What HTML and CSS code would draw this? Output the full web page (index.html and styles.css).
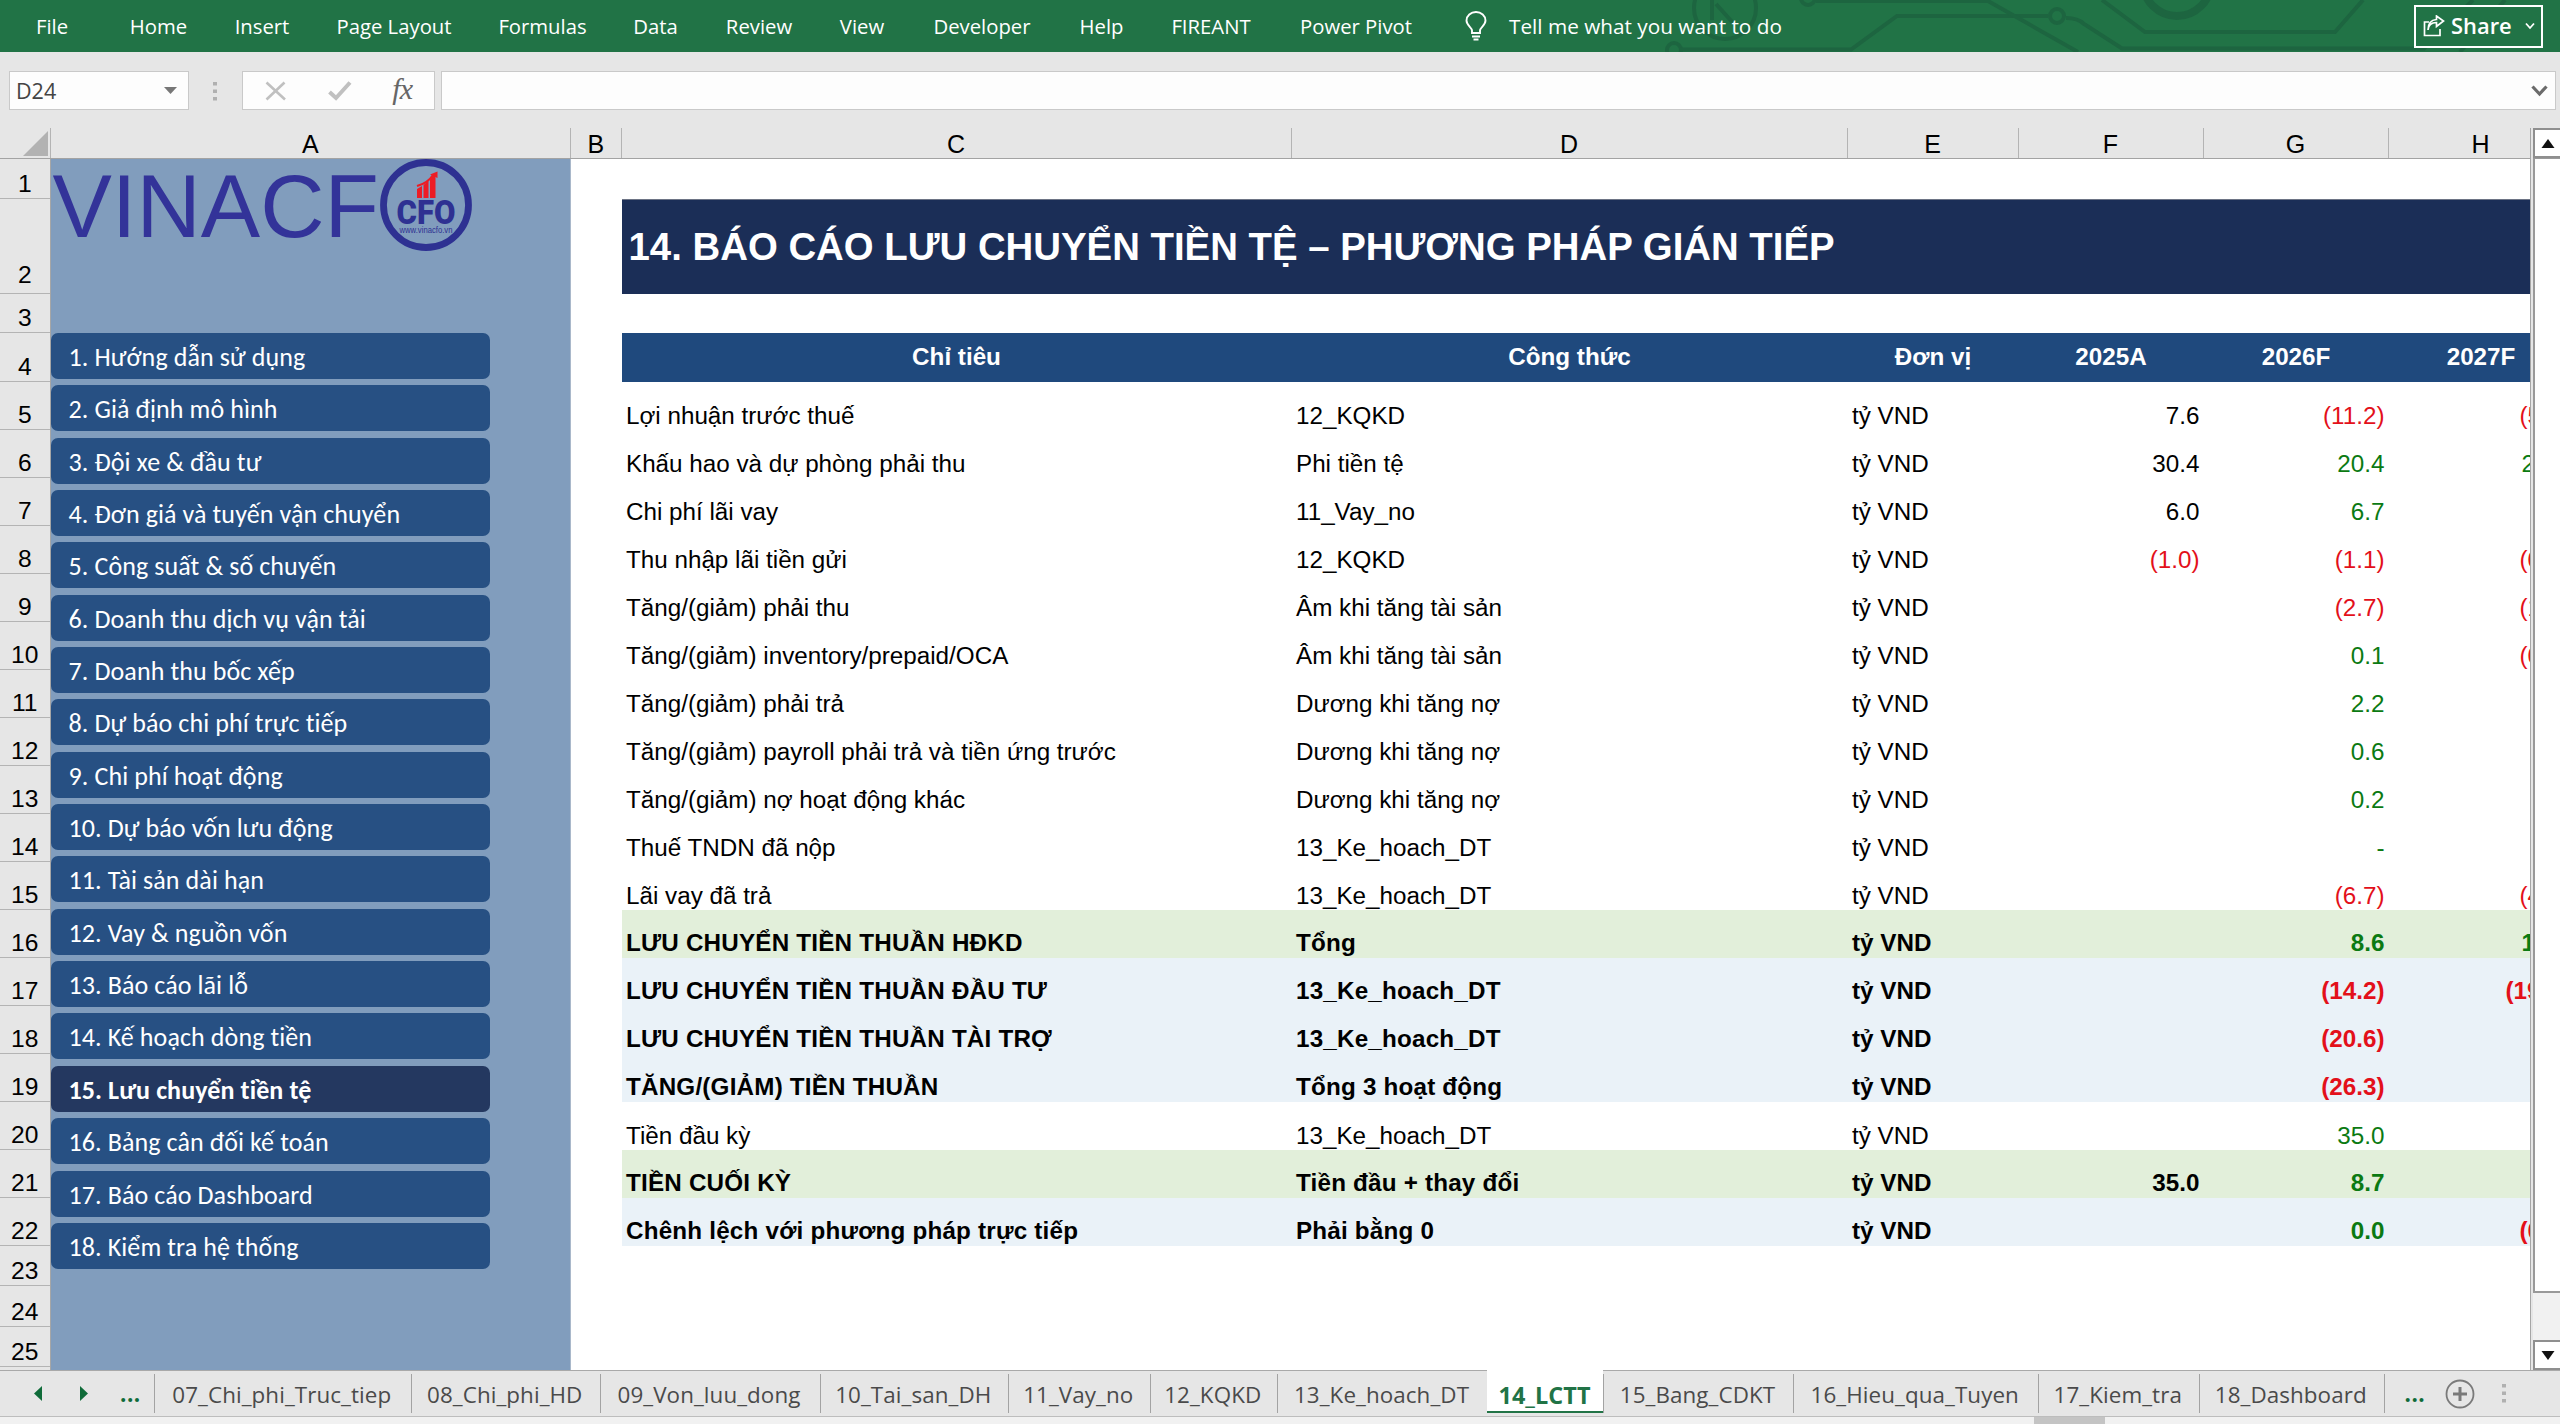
FILE: index.html
```html
<!DOCTYPE html>
<html lang="vi">
<head>
<meta charset="utf-8">
<title>14_LCTT</title>
<link rel="stylesheet" href="styles.css">
</head>
<body>
<header class="ribbon">
  <svg class="circuit" width="900" height="52" viewBox="1660 0 900 52" fill="none" stroke="#1d6540" stroke-width="4">
    <circle cx="1674" cy="50" r="7"/>
    <path d="M1680 49.500H1851L1897 16H2048M2066 18Q2078 18 2084 24L2122 48.500H2424L2473 0"/>
    <circle cx="2057" cy="16" r="7"/>
    <circle cx="1808" cy="-2" r="7"/>
    <path d="M1816 1H1988L2078 52M2102 0L2145 32H2335L2363 0M2460 52L2505 0M1712 -4V20M1734 24L1716 4"/>
    <circle cx="1725" cy="8" r="31"/>
    <circle cx="2177" cy="-18" r="34" stroke-width="8"/>
  </svg>
  <nav class="menu">
    <span class="m-file">File</span><span class="m-home">Home</span><span class="m-insert">Insert</span><span class="m-page">Page Layout</span><span class="m-formulas">Formulas</span><span class="m-data">Data</span><span class="m-review">Review</span><span class="m-view">View</span><span class="m-dev">Developer</span><span class="m-help">Help</span><span class="m-fire">FIREANT</span><span class="m-pivot">Power Pivot</span>
  </nav>
  <svg class="bulb" width="22" height="30" viewBox="0 0 22 30" fill="none" stroke="#fff" stroke-width="1.900"><path d="M7 22V19.500C7 16.500 1.500 14.500 1.500 9.500A9.500 8.500 0 0 1 20.500 9.500C20.500 14.500 15 16.500 15 19.500V22ZM7 25.500H15M8.500 28.500H13.500"/></svg>
  <span class="tell">Tell me what you want to do</span>
  <button class="share">
    <svg width="22" height="22" viewBox="0 0 22 22" fill="none" stroke="#fff" stroke-width="1.700"><path d="M6 7H1.500V20.500H17V14M5 15C5.500 9.500 9 7.500 13.500 7.500V11.500L20.500 6L13.500 1V4.500C8 5 5 9 5 15Z"/></svg>
    <span>Share</span>
    <svg class="caret" width="10" height="8" viewBox="0 0 10 8" fill="none" stroke="#fff" stroke-width="1.800"><path d="M1 1.500L5 6L9 1.500"/></svg>
  </button>
</header>

<div class="formula-bar">
  <div class="name-box"><span>D24</span><svg width="14" height="8"><path d="M0 0H13L6.500 7Z" fill="#777"/></svg></div>
  <svg class="grip" width="4" height="19" fill="#b0b0b0"><path d="M0 0H4V3.500H0ZM0 7.500H4V11H0ZM0 15H4V18.500H0Z"/></svg>
  <div class="fx-box">
    <svg width="22" height="20" viewBox="0 0 22 20" fill="none" stroke="#c0c0c0" stroke-width="2.600"><path d="M1.500 1.500L20 18.500M19.500 1.500L1.500 18.500"/></svg>
    <svg width="24" height="20" viewBox="0 0 24 20" fill="none" stroke="#c0c0c0" stroke-width="4"><path d="M1.500 11L8 17L22 1.500"/></svg>
    <span class="fx">fx</span>
  </div>
  <div class="formula-input"><svg width="17" height="12" viewBox="0 0 17 12" fill="none" stroke="#6b6b6b" stroke-width="3.200"><path d="M1.500 1.500L8.500 9L15.500 1.500"/></svg></div>
</div>

<main class="workbook">
  <div class="sheet-pane">
    <div class="col-heads">
      <div class="corner"><svg width="26" height="25"><path d="M25 0V25H0Z" fill="#b2b2b2"/></svg></div>
      <div>A</div><div>B</div><div>C</div><div>D</div><div>E</div><div>F</div><div>G</div><div>H</div>
    </div>
    <div class="sheet">
      <div class="row-heads">
        <div>1</div><div class="tall">2</div><div>3</div><div>4</div><div>5</div><div>6</div><div>7</div><div>8</div><div>9</div><div>10</div><div>11</div><div>12</div><div>13</div><div>14</div><div>15</div><div>16</div><div>17</div><div>18</div><div>19</div><div>20</div><div>21</div><div>22</div><div>23</div><div>24</div><div>25</div><div></div>
      </div>
      <aside class="side">
        <div class="logo">
          <span class="logo-word">VINACF</span>
          <svg width="92" height="92" viewBox="0 0 92 92">
            <circle cx="46" cy="46" r="42.500" fill="none" stroke="#2e3192" stroke-width="6.800"/>
            <path d="M37 30L42 27V39H37ZM43.500 26L48.500 22V39H43.500ZM50 20.500L55.500 14V39H50Z" fill="#ed1c24"/>
            <path d="M37 27Q48 24 53 16" fill="none" stroke="#ed1c24" stroke-width="2.200"/>
            <path d="M50 15.500L57.500 12.500V19Z" fill="#ed1c24"/>
            <text class="logo-cfo" x="46" y="64.500" text-anchor="middle" textLength="59" lengthAdjust="spacingAndGlyphs">CFO</text>
            <text class="logo-url" x="46" y="74" text-anchor="middle" textLength="53" lengthAdjust="spacingAndGlyphs">www.vinacfo.vn</text>
          </svg>
        </div>
        <nav class="links">
          <a>1. Hướng dẫn sử dụng</a><a>2. Giả định mô hình</a><a>3. Đội xe &amp; đầu tư</a><a>4. Đơn giá và tuyến vận chuyển</a><a>5. Công suất &amp; số chuyến</a><a>6. Doanh thu dịch vụ vận tải</a><a>7. Doanh thu bốc xếp</a><a>8. Dự báo chi phí trực tiếp</a><a>9. Chi phí hoạt động</a><a>10. Dự báo vốn lưu động</a><a>11. Tài sản dài hạn</a><a>12. Vay &amp; nguồn vốn</a><a>13. Báo cáo lãi lỗ</a><a>14. Kế hoạch dòng tiền</a><a class="current">15. Lưu chuyển tiền tệ</a><a>16. Bảng cân đối kế toán</a><a>17. Báo cáo Dashboard</a><a>18. Kiểm tra hệ thống</a>
        </nav>
      </aside>
      <section class="report">
        <h1>14. BÁO CÁO LƯU CHUYỂN TIỀN TỆ – PHƯƠNG PHÁP GIÁN TIẾP</h1>
        <div class="row head"><span>Chỉ tiêu</span><span>Công thức</span><span>Đơn vị</span><span>2025A</span><span>2026F</span><span>2027F</span></div>
        <div class="row"><span>Lợi nhuận trước thuế</span><span>12_KQKD</span><span>tỷ VND</span><span>7.6</span><span class="neg">(11.2)</span><span class="neg">(5</span></div>
        <div class="row"><span>Khấu hao và dự phòng phải thu</span><span>Phi tiền tệ</span><span>tỷ VND</span><span>30.4</span><span class="pos">20.4</span><span class="pos">2</span></div>
        <div class="row"><span>Chi phí lãi vay</span><span>11_Vay_no</span><span>tỷ VND</span><span>6.0</span><span class="pos">6.7</span><span></span></div>
        <div class="row"><span>Thu nhập lãi tiền gửi</span><span>12_KQKD</span><span>tỷ VND</span><span class="neg">(1.0)</span><span class="neg">(1.1)</span><span class="neg">(0</span></div>
        <div class="row"><span>Tăng/(giảm) phải thu</span><span>Âm khi tăng tài sản</span><span>tỷ VND</span><span></span><span class="neg">(2.7)</span><span class="neg">(1</span></div>
        <div class="row"><span>Tăng/(giảm) inventory/prepaid/OCA</span><span>Âm khi tăng tài sản</span><span>tỷ VND</span><span></span><span class="pos">0.1</span><span class="neg">(0</span></div>
        <div class="row"><span>Tăng/(giảm) phải trả</span><span>Dương khi tăng nợ</span><span>tỷ VND</span><span></span><span class="pos">2.2</span><span></span></div>
        <div class="row"><span>Tăng/(giảm) payroll phải trả và tiền ứng trước</span><span>Dương khi tăng nợ</span><span>tỷ VND</span><span></span><span class="pos">0.6</span><span></span></div>
        <div class="row"><span>Tăng/(giảm) nợ hoạt động khác</span><span>Dương khi tăng nợ</span><span>tỷ VND</span><span></span><span class="pos">0.2</span><span></span></div>
        <div class="row"><span>Thuế TNDN đã nộp</span><span>13_Ke_hoach_DT</span><span>tỷ VND</span><span></span><span class="pos">-</span><span></span></div>
        <div class="row"><span>Lãi vay đã trả</span><span>13_Ke_hoach_DT</span><span>tỷ VND</span><span></span><span class="neg">(6.7)</span><span class="neg">(4</span></div>
        <div class="row total green"><span>LƯU CHUYỂN TIỀN THUẦN HĐKD</span><span>Tổng</span><span>tỷ VND</span><span></span><span class="pos">8.6</span><span class="pos">1</span></div>
        <div class="row total blue"><span>LƯU CHUYỂN TIỀN THUẦN ĐẦU TƯ</span><span>13_Ke_hoach_DT</span><span>tỷ VND</span><span></span><span class="neg">(14.2)</span><span class="neg wide">(19</span></div>
        <div class="row total blue"><span>LƯU CHUYỂN TIỀN THUẦN TÀI TRỢ</span><span>13_Ke_hoach_DT</span><span>tỷ VND</span><span></span><span class="neg">(20.6)</span><span></span></div>
        <div class="row total blue"><span>TĂNG/(GIẢM) TIỀN THUẦN</span><span>Tổng 3 hoạt động</span><span>tỷ VND</span><span></span><span class="neg">(26.3)</span><span></span></div>
        <div class="row"><span>Tiền đầu kỳ</span><span>13_Ke_hoach_DT</span><span>tỷ VND</span><span></span><span class="pos">35.0</span><span></span></div>
        <div class="row total green"><span>TIỀN CUỐI KỲ</span><span>Tiền đầu + thay đổi</span><span>tỷ VND</span><span>35.0</span><span class="pos">8.7</span><span></span></div>
        <div class="row total blue"><span>Chênh lệch với phương pháp trực tiếp</span><span>Phải bằng 0</span><span>tỷ VND</span><span></span><span class="pos">0.0</span><span class="neg">(0</span></div>
      </section>
    </div>
  </div>
  <div class="scroll">
    <div class="sc-btn"><svg width="14" height="9"><path d="M7 0L13.500 9H0.500Z" fill="#111"/></svg></div>
    <div class="sc-thumb"></div>
    <div class="sc-track"></div>
    <div class="sc-btn"><svg width="14" height="9"><path d="M7 9L13.500 0H0.500Z" fill="#111"/></svg></div>
  </div>
</main>

<footer class="tabs">
  <div class="tab-nav">
    <svg width="8" height="15"><path d="M8 0V15L0 7.500Z" fill="#0f6b39"/></svg>
    <svg width="8" height="15"><path d="M0 0V15L8 7.500Z" fill="#0f6b39"/></svg>
    <span class="more">...</span>
  </div>
  <div class="tab t07">07_Chi_phi_Truc_tiep</div><div class="tab t08">08_Chi_phi_HD</div><div class="tab t09">09_Von_luu_dong</div><div class="tab t10">10_Tai_san_DH</div><div class="tab t11">11_Vay_no</div><div class="tab t12">12_KQKD</div><div class="tab t13">13_Ke_hoach_DT</div><div class="tab t14 active">14_LCTT</div><div class="tab t15">15_Bang_CDKT</div><div class="tab t16">16_Hieu_qua_Tuyen</div><div class="tab t17">17_Kiem_tra</div><div class="tab t18">18_Dashboard</div>
  <div class="tab-end">
    <span class="more">...</span>
    <svg class="add" width="30" height="30" viewBox="0 0 30 30" fill="none" stroke="#7a7a7a"><circle cx="15" cy="15" r="13.500" stroke-width="1.800"/><path d="M15 8V22M8 15H22" stroke-width="3"/></svg>
    <svg width="4" height="19" fill="#b0b0b0"><path d="M0 0H4V3.500H0ZM0 7.500H4V11H0ZM0 15H4V18.500H0Z"/></svg>
  </div>
</footer>
<div class="status"><div class="h-thumb"></div></div>
</body>
</html>
```
FILE: styles.css
```css
* { box-sizing: border-box; }
body {
  margin: 0; width: 2560px; height: 1424px; overflow: hidden;
  display: flex; flex-direction: column;
  background: #e6e6e6; color: #000;
  font-family: "Liberation Sans", Arial, sans-serif;
}
svg { display: block; flex: none; }

/* Ribbon */
.ribbon {
  position: relative; flex: none; height: 52px; background: #217346; color: #fff;
  display: flex; align-items: center; padding: 0 17px 0 6px;
  font: 20.300px/28px "Open Sans", "Segoe UI", sans-serif;
}
.circuit { position: absolute; right: 0; top: 0; }
.menu { display: flex; text-align: center; white-space: nowrap; }
.m-file { width: 92px; } .m-home { width: 121px; } .m-insert { width: 86px; }
.m-page { width: 178px; } .m-formulas { width: 119px; } .m-data { width: 107px; }
.m-review { width: 100px; } .m-view { width: 106px; } .m-dev { width: 134px; }
.m-help { width: 105px; } .m-fire { width: 114px; } .m-pivot { width: 176px; }
.bulb { margin-left: 21px; }
.tell { position: relative; margin-left: 22px; font-size: 20.750px; }
.share {
  position: relative; margin-left: auto; width: 129px; height: 43px; padding: 0 6px 0 7px;
  border: 2px solid #fff; background: #217346; color: #fff;
  display: flex; align-items: center; gap: 6px;
  font: 600 21.900px/28px "Open Sans", sans-serif;
}
.caret { margin-left: auto; }

/* Formula bar */
.formula-bar { flex: none; height: 76px; padding: 19px 4px 0 9px; display: flex; align-items: flex-start; }
.name-box, .fx-box, .formula-input {
  height: 39px; background: #fdfdfd; border: 1px solid #c9c9c9; display: flex; align-items: center;
}
.name-box { width: 180px; justify-content: space-between; padding: 0 10px 0 6px; color: #444; font: 21.500px/28px "Open Sans", sans-serif; }
.grip { margin: 11px 25px 0 24px; }
.fx-box { width: 193px; padding: 0 22px 0 22px; justify-content: space-between; color: #666; }
.fx { font: italic 30px/30px "Liberation Serif", serif; letter-spacing: -1px; padding-bottom: 3px; }
.formula-input { flex: 1; margin-left: 6px; justify-content: flex-end; padding-right: 7px; }

/* Workbook */
.workbook { flex: none; height: 1242px; display: flex; }
.sheet-pane { width: 2531px; border-right: 1px solid #a6a6a6; overflow: hidden; }
.col-heads {
  height: 31px; width: 2574px; border-bottom: 1px solid #a3a3a3;
  display: grid; grid-template-columns: 50.500px 520.500px 50.500px 670px 556px 171px 185px 185px 185px;
  font-size: 25px; line-height: 33px; text-align: center;
}
.col-heads > div { border-right: 1px solid #b4b4b4; height: 30px; }
.corner { display: flex; justify-content: flex-end; padding: 3px 1px 0 0; }
.sheet { display: flex; height: 1211px; width: 2574px; background: #fff; }
.row-heads {
  width: 50.500px; height: 1211px; overflow: hidden; background: #e6e6e6; border-right: 1px solid #a6a6a6;
  display: grid; grid-template-rows: 40px 94.500px 39.500px 48.500px repeat(18, 48.050px) repeat(4, 40.100px);
  font-size: 24.600px; line-height: 28px; text-align: center;
}
.row-heads > div { display: flex; align-items: flex-end; justify-content: center; border-bottom: 1px solid #b4b4b4; }
.row-heads > .tall { padding-bottom: 4px; }

/* Navigation column */
.side { width: 520.500px; background: #819dbd; border-right: 1px solid #a9b8ca; }
.logo { height: 174px; display: flex; align-items: flex-start; }
.logo-word { width: 329.500px; padding-left: 2px; font-size: 89px; line-height: 94px; color: #333399; white-space: nowrap; }
.logo-cfo { font: 900 34px Roboto, sans-serif; fill: #2e3192; }
.logo-url { font: 8.500px "Liberation Sans", sans-serif; fill: #2e3192; }
.links { display: flex; flex-direction: column; gap: 6.350px; width: 439.500px; }
.links a {
  height: 46px; padding: 3px 0 0 18px; border-radius: 7px; background: #275083; color: #fff;
  font: 26px/43px Carlito, Calibri, Lato, sans-serif; letter-spacing: 0.100px; font-variant-ligatures: none; white-space: nowrap;
}
.links .current { background: #243860; font-weight: 700; }

/* Report */
.report { padding: 39.500px 0 0 50.500px; width: 2003px; }
.report h1 {
  margin: 0 0 39.500px; height: 95px; padding-left: 7px; background: #1b2e57; color: #fff;
  border-top: 1px solid #6d7485; font-size: 38.370px; line-height: 94px; white-space: nowrap;
}
.row {
  display: grid; grid-template-columns: 670px 556px 171px 185px 185px 185px;
  height: 48.050px; align-items: end; font-size: 24.230px; line-height: 28px; white-space: nowrap;
}
.row span { padding: 0 4px 0 4.500px; }
.row span:nth-child(n+4) { text-align: right; }
.row span:nth-child(6) { text-align: left; padding-left: 133px; }
.row .neg:nth-child(6) { padding-left: 131px; }
.row .wide:nth-child(6) { padding-left: 117px; }
.row.head { height: 48.500px; background: #1f497d; color: #fff; font-weight: 700; align-items: center; }
.row.head span, .row.head span:nth-child(n) { text-align: center; padding: 0; }
.total { font-weight: 700; padding-bottom: 1.500px; }
.total span:nth-child(-n+2) { letter-spacing: 0.200px; }
.green { background: #e2efda; }
.blue { background: #eaf2f8; }
.pos { color: #0b7a12; }
.neg { color: #e3101a; }

/* Vertical scroll bar */
.scroll { width: 29px; padding-left: 2px; display: flex; flex-direction: column; background: #e6e6e6; }
.sc-btn { height: 30px; background: #fff; border: 2px solid #8f8f8f; border-right: 0; display: flex; align-items: center; justify-content: center; }
.sc-thumb { height: 1135px; background: #fff; border: 2px solid #999; border-right: 0; border-top-width: 1px; }
.sc-track { flex: 1; background: #f1f1f1; }

/* Sheet tabs */
.tabs {
  flex: none; height: 47px; display: flex; border-top: 1px solid #a9a9a9; border-bottom: 1px solid #bdbdbd;
  font: 22.400px/30px "Open Sans", "Segoe UI", sans-serif; color: #4a4a4a;
}
.tab-nav { width: 153.500px; display: flex; align-items: center; padding-left: 34px; position: relative; }
.tab-nav svg { margin-right: 38px; }
.more { color: #0f6b39; font-weight: 700; letter-spacing: 0.500px; }
.tab-nav .more { margin-left: -6px; }
.tab { height: 45px; position: relative; padding: 9px 1px 0 0; text-align: center; white-space: nowrap; letter-spacing: 0.080px; }
.tab::before { content: ""; position: absolute; left: 0; top: 3px; width: 1px; height: 39px; background: #a3a3a3; }
.t07 { width: 257.500px; } .t08 { width: 188.500px; } .t09 { width: 220px; } .t10 { width: 188.500px; }
.t11 { width: 141.500px; } .t12 { width: 127.500px; } .t13 { width: 210px; } .t14 { width: 116px; }
.t15 { width: 190px; } .t16 { width: 244.500px; } .t17 { width: 161.500px; } .t18 { width: 184.500px; }
.tab.active {
  margin-top: -1px; height: 43px; padding-top: 10px; background: #fff; color: #217346; font-weight: 700; font-size: 23.400px;
  border-bottom: 2px solid #217346;
}
.tab.active::before { display: none; }
.tab-end { position: relative; flex: 1; display: flex; align-items: center; padding-left: 20px; border-left: 1px solid transparent; }
.tab-end::before { content: ""; position: absolute; left: -1px; top: 3px; width: 1px; height: 39px; background: #a3a3a3; }
.tab-end .add { margin: 0 27px 0 20px; }
.status { flex: 1; background: #f1f1f1; }
.h-thumb { width: 71px; height: 7px; margin-left: 2034px; background: #c4c4c4; }
```
